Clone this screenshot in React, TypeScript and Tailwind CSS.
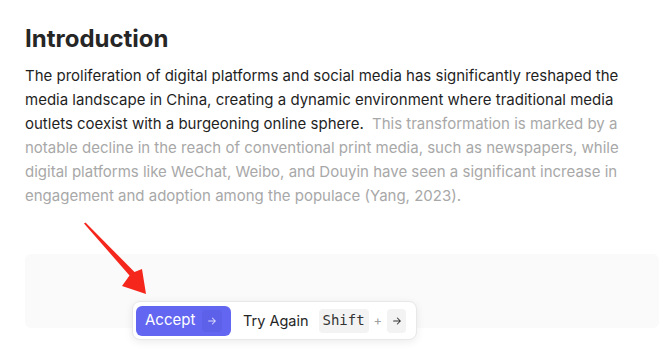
import React from 'react';

const ArrowRight: React.FC<{ className?: string }> = ({ className }) => (
  <svg viewBox="0 0 16 16" className={className} fill="none" stroke="currentColor" strokeWidth={1.4} strokeLinecap="round" strokeLinejoin="round">
    <path d="M3.5 8h9M8.5 4l4 4-4 4" />
  </svg>
);

const App: React.FC = () => {
  return (
    <div className="relative w-[659px] h-[353px] bg-white overflow-hidden font-['Inter',sans-serif]">
      <div className="pl-[25px] pt-[23px]">
        <h1 className="text-2xl leading-8 font-bold text-[#262626]">Introduction</h1>
        <p className="mt-[9px] w-[600px] text-[15px] leading-6 text-[#1f1f1f]">
          The proliferation of digital platforms and social media has significantly reshaped the media landscape in
          China, creating a dynamic environment where traditional media outlets coexist with a burgeoning online
          sphere.{' '}
          <span className="ml-1 text-[#a8a8a8]">
            This transformation is marked by a notable decline in the reach of conventional print media, such as
            newspapers, while digital platforms like WeChat, Weibo, and Douyin have seen a significant increase in
            engagement and adoption among the populace (Yang, 2023).
          </span>
        </p>
        <div className="mt-[46px] h-[74px] rounded-md bg-[#fafafa]"></div>
      </div>

      {/* suggestion toolbar */}
      <div className="absolute left-[132px] top-[301px] flex h-[39px] w-[285px] items-center rounded-lg border border-[#e8e8e8] bg-white pl-[3px] shadow-[0_2px_8px_rgba(0,0,0,0.08)]">
        <button className="flex h-[30px] w-[95px] items-center justify-between rounded-md bg-[#6366f1] pl-[9px] pr-[9px] text-[15px] text-white">
          <span>Accept</span>
          <span className="flex h-[22px] w-[20px] items-center justify-center rounded bg-[#5d60e8]">
            <ArrowRight className="h-3 w-3 text-[#dcdcfb]" />
          </span>
        </button>
        <span className="ml-[12px] text-[14.5px] text-[#262626]">Try Again</span>
        <span className="ml-[10px] flex h-6 w-[50px] items-center justify-center rounded bg-[#f3f3f3] font-['DejaVu_Sans_Mono',monospace] text-[14px] text-[#333]">
          Shift
        </span>
        <span className="mx-[5px] text-[13px] text-[#a0a0a0]">+</span>
        <span className="flex h-6 w-[19px] items-center justify-center rounded bg-[#f3f3f3]">
          <ArrowRight className="h-3 w-3 text-[#333]" />
        </span>
      </div>

      {/* red pointer arrow */}
      <svg className="absolute left-0 top-0" width="659" height="353" viewBox="0 0 659 353">
        <path d="M84 223.5 L129.5 275.5 L122 286 L146 294 L142 269 L134.5 272 L85.5 222.5 Z" fill="#f5271d" />
      </svg>
    </div>
  );
};

export default App;
